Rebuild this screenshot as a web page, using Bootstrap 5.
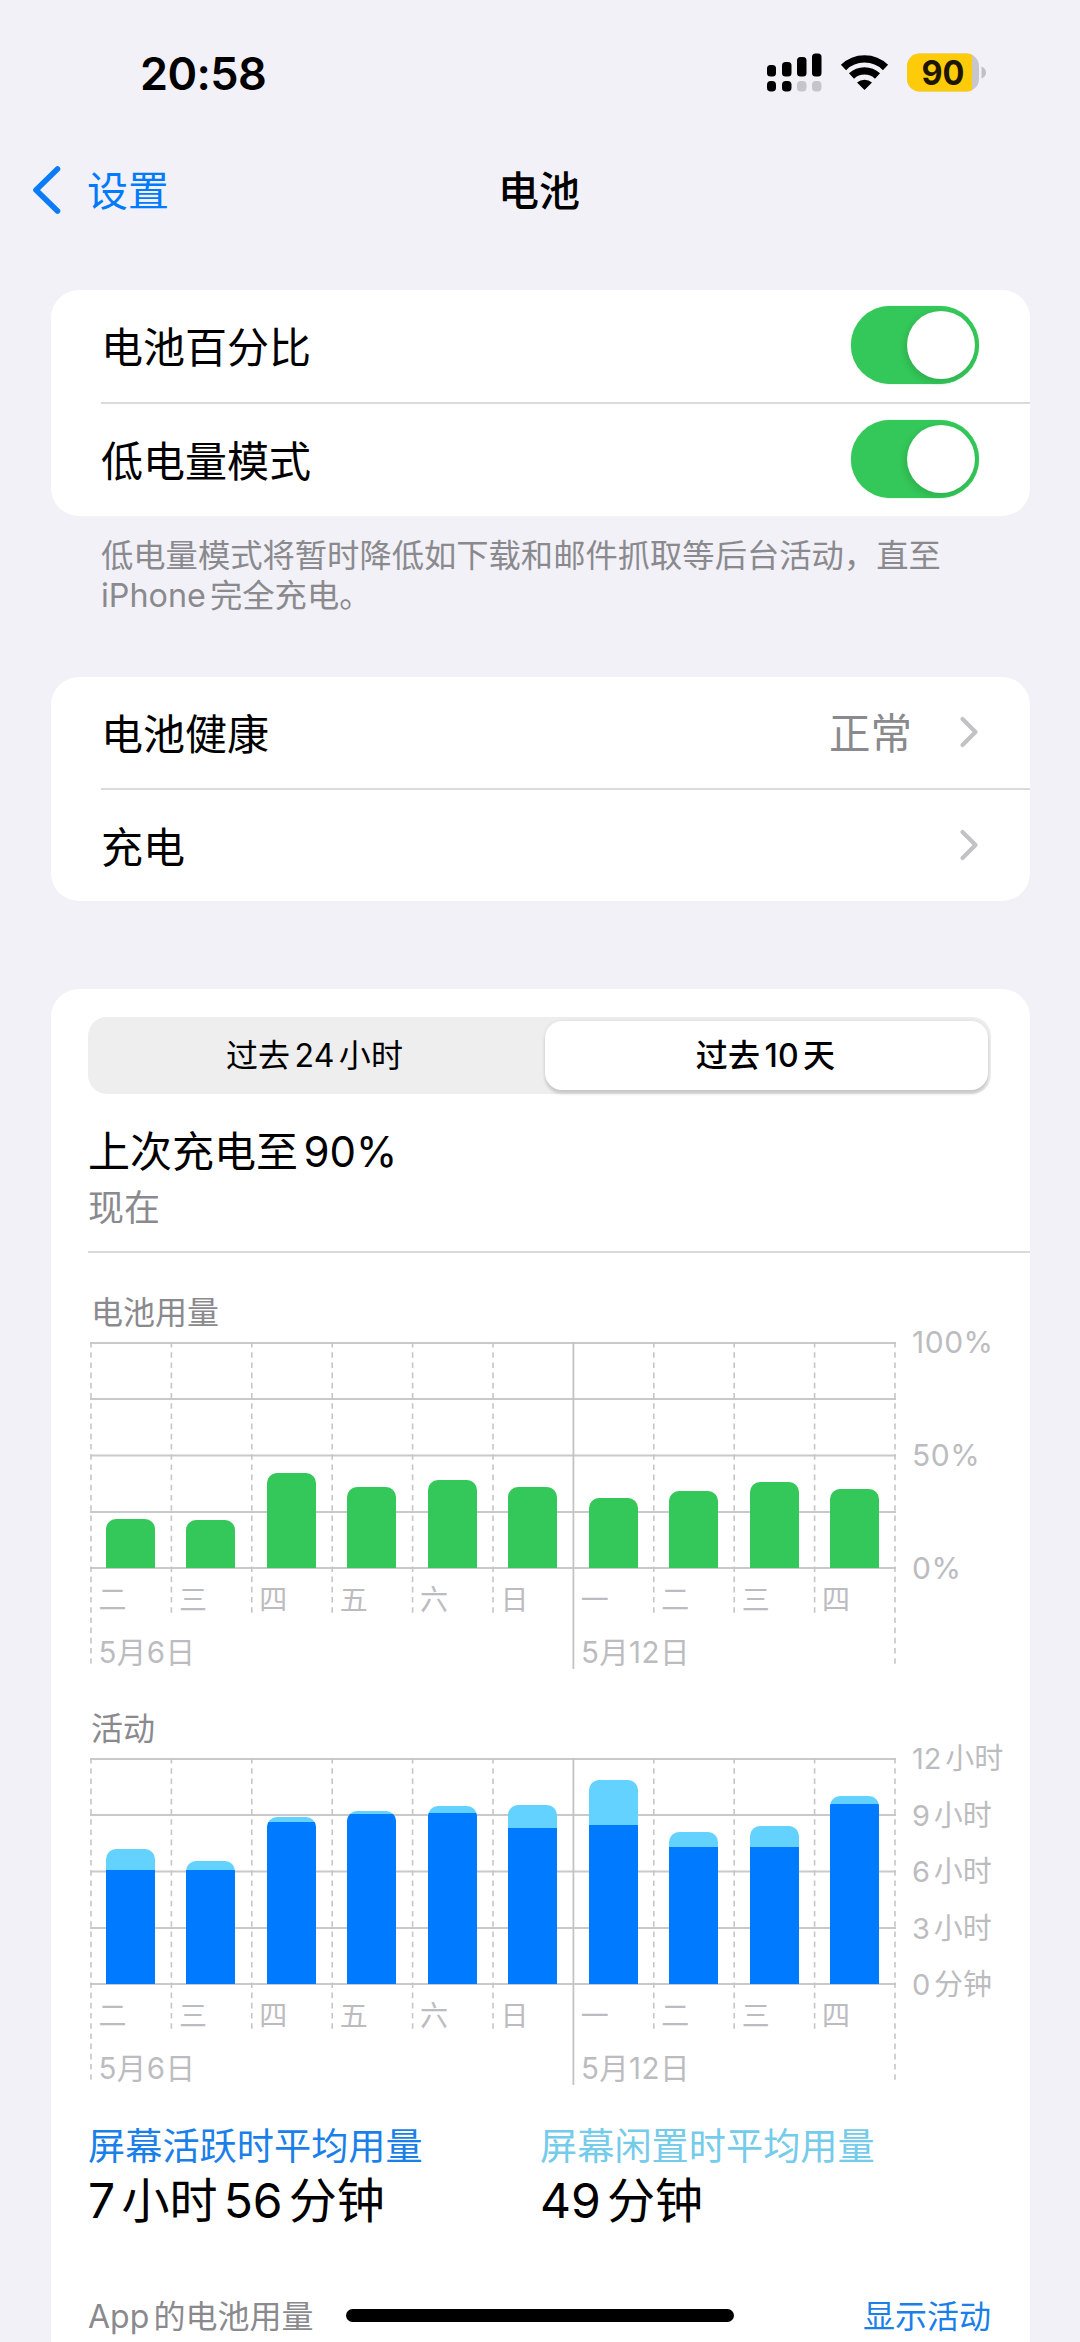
<!DOCTYPE html>
<html lang="zh-CN">
<head>
<meta charset="utf-8">
<meta name="viewport" content="width=device-width, initial-scale=1">
<title>电池</title>
<link href="https://cdn.jsdelivr.net/npm/bootstrap@5.3.0/dist/css/bootstrap.min.css" rel="stylesheet">
<style>
  body{background:#f2f1f7;color:#000;font-family:Inter,"Noto Sans CJK SC",sans-serif;font-size:42px;line-height:1.2}
  .screen{width:1080px;height:2342px;overflow:hidden}
  .status{height:143px;padding:0 93px 0 140px}
  .clock{font-size:45px;font-weight:600;letter-spacing:-.6px}
  .topbar{height:97px;font-size:41px;padding-left:32px}
  .topbar .ttl{font-weight:500;left:498px;top:24px}
  .blue{color:#007aff}.txt-blue{color:#1a7fe8}.txt-sky{color:#74cbea}
  .grey{color:#8a8a8e}
  .panel{background:#fff;border-radius:28px;margin:0 50px 0 51px}
  .item{height:113px;margin-left:50px;padding-right:51px}
  .item + .item{border-top:2px solid #dadadc}
  .lbl{padding-top:5px}
  .tog{width:128px;height:78px;border-radius:39px;background:#34c759;padding:5px 4px 5px 5px;box-shadow:0 0 1px #34c759;margin-bottom:2px}
  .tog i{width:68px;height:68px;border-radius:50%;background:#fff;box-shadow:-2px 3px 7px rgba(0,0,0,.12)}
  .foot{margin:20px 0 0 101px;font-size:32.3px;line-height:40px;height:141px;white-space:nowrap}
  .n{margin:0 .13em}.n1{margin-left:.13em}
  .seg{width:903px;height:77px;border-radius:19px;background:#eeeeef;font-size:32px;padding:4px 3px}
  .seg span{letter-spacing:.2px}
  .seg .off{width:454px;padding:2px 7px 0 0}
  .seg .on{border-radius:17px;background:#fff;font-weight:500;box-shadow:0 4px 3px rgba(0,0,0,.13),0 0 4px rgba(0,0,0,.08);width:443px;padding:2px 2px 0 0}
  .inner{padding-left:37px}
  .rule{height:2px;background:#dadadc}
  .cap{font-size:32px;line-height:40px;height:50px}
  .chart{height:366px;margin-left:1.5px}
  .plot{width:806px;height:328px}
  .bars{height:226px;padding:0 16px;justify-content:space-between}
  .bar{width:49px;border-radius:10px 10px 0 0;background:#34c759;overflow:hidden;display:flex;flex-direction:column;justify-content:flex-end}
  .bar.act{background:#64d2ff}
  .bar.act i{background:#007aff;display:block}
  .days{font-size:28px;color:#bcbcc0;height:65px;line-height:65px;padding-left:9px}
  .days span{width:80.4px;flex:none}
  .dates{font-size:29.5px;letter-spacing:.4px;color:#bcbcc0;line-height:38px;padding-left:9px}
  .dates span{width:482.4px;flex:none}
  .yax{font-size:29px;color:#bcbcc0;line-height:34px;height:260px;margin-top:-16px;margin-left:16.5px;white-space:nowrap}
  .yax.pc{font-size:30px;letter-spacing:.5px;margin-top:-17px}
  .sumt{font-size:37.2px;line-height:46px}
  .sumv{font-size:48px;line-height:62px}
  .home{left:346px;top:2309px;width:388px;height:13px;border-radius:7px;background:#000}
</style>
<script src="https://cdn.jsdelivr.net/npm/bootstrap@5.3.0/dist/js/bootstrap.bundle.min.js"></script>
</head>
<body>
<svg width="0" height="0" class="position-absolute">
  <symbol id="grid" viewBox="0 0 806 328">
    <path d="M0 1H806M0 57H806M0 113.5H806M0 170H806M0 226H806" stroke="#c9c9cb" stroke-width="2" fill="none"/>
    <path d="M1 0V322M805 0V322M81.4 0V272M161.8 0V272M242.2 0V272M322.6 0V272M403 0V272M563.8 0V272M644.2 0V272M724.6 0V272" stroke="#c6c6c8" stroke-width="1.6" stroke-dasharray="5.6 4.6" fill="none"/>
    <path d="M483.4 0V327" stroke="#c3c3c5" stroke-width="1.8" fill="none"/>
  </symbol>
  <symbol id="chev" viewBox="0 0 20 32"><path d="M3.500 3L16.500 16L3.500 29" fill="none" stroke="#c2c2c5" stroke-width="4.2" stroke-linecap="round" stroke-linejoin="round"/></symbol>
</svg>
<div class="screen position-relative">
  <div class="status d-flex align-items-center justify-content-between">
    <div class="clock pt-1">20:58</div>
    <svg width="226" height="50" viewBox="762 47 226 50" style="margin-right:-1px">
      <g>
        <rect x="767" y="65" width="9" height="11.500" rx="3.500"/><rect x="782" y="62" width="9.500" height="14.500" rx="3.500"/><rect x="797" y="57" width="9.500" height="19.500" rx="3.500"/><rect x="812" y="53.500" width="9.500" height="23" rx="3.500"/>
        <rect x="767" y="81" width="9" height="10.500" rx="3.800"/><rect x="782" y="81" width="9.500" height="10.500" rx="3.800"/>
        <g fill="#c6c6ca"><rect x="797" y="81" width="9.500" height="10.500" rx="3.800"/><rect x="812" y="81" width="9.500" height="10.500" rx="3.800"/></g>
      </g>
      <g fill="none" stroke="#000" stroke-width="7.400"><path d="M843.500 67.500A30 30 0 0 1 885.500 67.500"/><path d="M851.500 76A19 19 0 0 1 877.500 76"/></g>
      <path d="M857 82.500A11.500 11.500 0 0 1 872 82.500L864.500 90Z"/>
      <clipPath id="b"><rect x="907" y="53.500" width="72" height="38" rx="12.500"/></clipPath>
      <g clip-path="url(#b)"><rect x="907" y="53" width="72" height="39" fill="#c7c7cb"/><rect x="907" y="53" width="65" height="39" fill="#fecb0a"/></g>
      <path d="M981.500 66.500Q986 68.500 986 72.500T981.500 78.500Z" fill="#c0c0c5"/>
      <text x="943" y="85" text-anchor="middle" font-size="34.500" font-weight="700" textLength="43" lengthAdjust="spacingAndGlyphs" font-family="Inter, sans-serif" fill="#1c1600">90</text>
    </svg>
  </div>
  <div class="topbar d-flex align-items-center position-relative">
    <svg width="30" height="50" viewBox="0 0 30 50" style="margin-bottom:3px"><path d="M25.500 4L4 25L25.500 46" fill="none" stroke="#0a7cf8" stroke-width="5.600" stroke-linecap="round" stroke-linejoin="round"/></svg>
    <span class="blue" style="margin-left:25px">设置</span>
    <span class="ttl position-absolute">电池</span>
  </div>

  <div class="panel" style="margin-top:50px">
    <div class="item d-flex align-items-center justify-content-between" style="height:112px"><span class="lbl">电池百分比</span><span class="tog d-flex justify-content-end"><i></i></span></div>
    <div class="item d-flex align-items-center justify-content-between" style="height:114px"><span class="lbl">低电量模式</span><span class="tog d-flex justify-content-end"><i></i></span></div>
  </div>
  <div class="foot grey">低电量模式将暂时降低如下载和邮件抓取等后台活动，直至<br>iPhone<span class="n1">完全充电。</span></div>

  <div class="panel">
    <div class="item d-flex align-items-center justify-content-between" style="height:111px"><span class="lbl">电池健康</span><span class="d-flex align-items-center"><span class="grey lbl" style="font-size:41.500px">正常</span><svg width="20" height="32" style="margin-left:47px"><use href="#chev"/></svg></span></div>
    <div class="item d-flex align-items-center justify-content-between"><span class="lbl">充电</span><svg width="20" height="32" style="margin-bottom:2px"><use href="#chev"/></svg></div>
  </div>

  <div class="panel inner" style="margin-top:88px;height:1500px;padding-top:28px">
    <div class="seg d-flex"><div class="off d-flex align-items-center justify-content-center"><span>过去<span class="n">24</span>小时</span></div><div class="on d-flex align-items-center justify-content-center"><span>过去<span class="n">10</span>天</span></div></div>
    <div style="height:64px;line-height:60px;margin-top:28px">上次充电至<span class="n1">90%</span></div>
    <div class="grey" style="font-size:36px;line-height:45px;height:65px">现在</div>
    <div class="rule"></div>

    <div class="cap grey" style="margin:40px 0 0 3px;height:49px">电池用量</div>
    <div class="chart d-flex" style="height:367px">
      <div class="plot position-relative">
        <svg class="position-absolute top-0 start-0" width="806" height="328"><use href="#grid"/></svg>
        <div class="bars d-flex align-items-end position-relative">
          <div class="bar" style="height:49px"></div><div class="bar" style="height:48px"></div><div class="bar" style="height:95px"></div><div class="bar" style="height:81px"></div><div class="bar" style="height:88px"></div><div class="bar" style="height:81px"></div><div class="bar" style="height:70px"></div><div class="bar" style="height:77px"></div><div class="bar" style="height:86px"></div><div class="bar" style="height:79px"></div>
        </div>
        <div class="days d-flex"><span>二</span><span>三</span><span>四</span><span>五</span><span>六</span><span>日</span><span>一</span><span>二</span><span>三</span><span>四</span></div>
        <div class="dates d-flex"><span>5月6日</span><span>5月12日</span></div>
      </div>
      <div class="yax pc d-flex flex-column justify-content-between"><span>100%</span><span>50%</span><span>0%</span></div>
    </div>

    <div class="cap grey" style="margin-left:3px;height:49px">活动</div>
    <div class="chart d-flex">
      <div class="plot position-relative">
        <svg class="position-absolute top-0 start-0" width="806" height="328"><use href="#grid"/></svg>
        <div class="bars d-flex align-items-end position-relative">
          <div class="bar act" style="height:135px"><i style="height:114px"></i></div><div class="bar act" style="height:123px"><i style="height:114px"></i></div><div class="bar act" style="height:167px"><i style="height:162px"></i></div><div class="bar act" style="height:173px"><i style="height:170px"></i></div><div class="bar act" style="height:178px"><i style="height:171px"></i></div><div class="bar act" style="height:179px"><i style="height:156px"></i></div><div class="bar act" style="height:204px"><i style="height:159px"></i></div><div class="bar act" style="height:152px"><i style="height:137px"></i></div><div class="bar act" style="height:158px"><i style="height:137px"></i></div><div class="bar act" style="height:188px"><i style="height:180px"></i></div>
        </div>
        <div class="days d-flex"><span>二</span><span>三</span><span>四</span><span>五</span><span>六</span><span>日</span><span>一</span><span>二</span><span>三</span><span>四</span></div>
        <div class="dates d-flex"><span>5月6日</span><span>5月12日</span></div>
      </div>
      <div class="yax d-flex flex-column justify-content-between"><span>12<span class="n1">小时</span></span><span>9<span class="n1">小时</span></span><span>6<span class="n1">小时</span></span><span>3<span class="n1">小时</span></span><span>0<span class="n1">分钟</span></span></div>
    </div>

    <div class="d-flex">
      <div style="width:452px"><div class="sumt txt-blue">屏幕活跃时平均用量</div><div class="sumv">7<span class="n1">小时</span><span class="n">56</span>分钟</div></div>
      <div><div class="sumt txt-sky">屏幕闲置时平均用量</div><div class="sumv">49<span class="n1">分钟</span></div></div>
    </div>
    <div class="d-flex justify-content-between" style="font-size:32px;line-height:40px;padding-right:39px;margin-top:65px"><span class="grey">App<span class="n1">的电池用量</span></span><span class="txt-blue">显示活动</span></div>
  </div>
  <div class="home position-absolute"></div>
</div>
</body>
</html>
